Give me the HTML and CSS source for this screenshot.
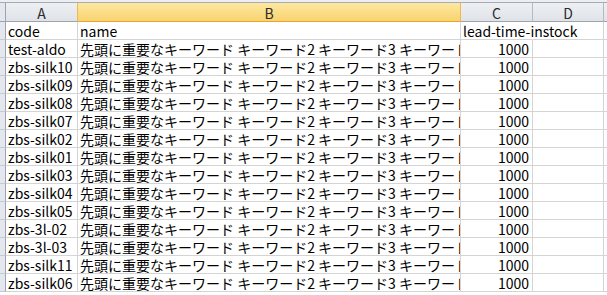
FILE: index.html
```html
<!DOCTYPE html>
<html lang="ja">
<head>
    <meta charset="UTF-8">
    <title>シート</title>
    <link rel="stylesheet" href="styles.css">
</head>
<body>
    <div class="sheet">
        <div class="topbar"></div>
        <div class="row head">
            <div class="cell rh corner"></div>
            <div class="cell col-a">A</div>
            <div class="cell col-b selected">B</div>
            <div class="cell col-c">C</div>
            <div class="cell col-d">D</div>
            <div class="cell col-e"></div>
        </div>
        <div class="row">
            <div class="cell rh"></div>
            <div class="cell col-a">code</div>
            <div class="cell col-b">name</div>
            <div class="cell col-c spill">lead-time-instock</div>
            <div class="cell col-d"></div>
            <div class="cell col-e"></div>
        </div>
        <div id="rows"></div>
    </div>

    <script>
        const codes = ['test-aldo', 'zbs-silk10', 'zbs-silk09', 'zbs-silk08', 'zbs-silk07',
            'zbs-silk02', 'zbs-silk01', 'zbs-silk03', 'zbs-silk04', 'zbs-silk05',
            'zbs-3l-02', 'zbs-3l-03', 'zbs-silk11', 'zbs-silk06'];
        const name = '先頭に重要なキーワード キーワード2 キーワード3 キーワード4';
        const rows = document.getElementById('rows');
        codes.forEach(code => {
            const row = document.createElement('div');
            row.classList.add('row');
            row.innerHTML = `
                <div class="cell rh"></div>
                <div class="cell col-a">${code}</div>
                <div class="cell col-b">${name}</div>
                <div class="cell col-c num">1000</div>
                <div class="cell col-d"></div>
                <div class="cell col-e"></div>
            `;
            rows.appendChild(row);
        });
    </script>
</body>
</html>
```

FILE: styles.css
```css
body {
    margin: 0;
    padding: 0;
    background: #fff;
    font-family: "Noto Sans CJK JP", "Noto Sans", sans-serif;
    font-size: 14px;
    color: #000;
    overflow: hidden;
}
.sheet {
    width: 607px;
    height: 295px;
    overflow: hidden;
}
.topbar {
    height: 2px;
    background: #eceef1;
    border-bottom: 1px solid #a5acb5;
}
.row {
    display: flex;
    height: 18px;
}
.cell {
    box-sizing: border-box;
    height: 18px;
    line-height: 19px;
    padding: 0 2px;
    border-right: 1px solid #d4d4d4;
    border-bottom: 1px solid #d4d4d4;
    white-space: nowrap;
    overflow: hidden;
    flex: none;
}
.rh {
    width: 6px;
    padding: 0;
    background: #e4e8ee;
    border-right: 1px solid #9ea4ad;
    border-bottom: 1px solid #c5cbd3;
}
.col-a { width: 72px; }
.col-b { width: 383px; }
.col-c { width: 72px; }
.col-d { width: 71px; }
.col-e { flex: 1; }
.num {
    text-align: right;
    padding-right: 3px;
}
.spill {
    overflow: visible;
    border-right-color: transparent;
    position: relative;
    z-index: 1;
}
.head {
    height: 19px;
}
.head .cell {
    height: 19px;
    line-height: 20px;
    text-align: center;
    color: #2b2b2b;
    background: linear-gradient(#eef0f3, #dfe3e8);
    border-right: 1px solid #b4bac2;
    border-bottom: 1px solid #9ea4ad;
}
.head .corner {
    background: #e4e8ee;
    border-right-color: #9ea4ad;
}
.head .selected {
    background: linear-gradient(#fde7a0, #f8d470);
    border-right-color: #f2b84b;
    border-bottom-color: #f0a030;
}
.head .col-a {
    border-right-color: #f2b84b;
}
```
